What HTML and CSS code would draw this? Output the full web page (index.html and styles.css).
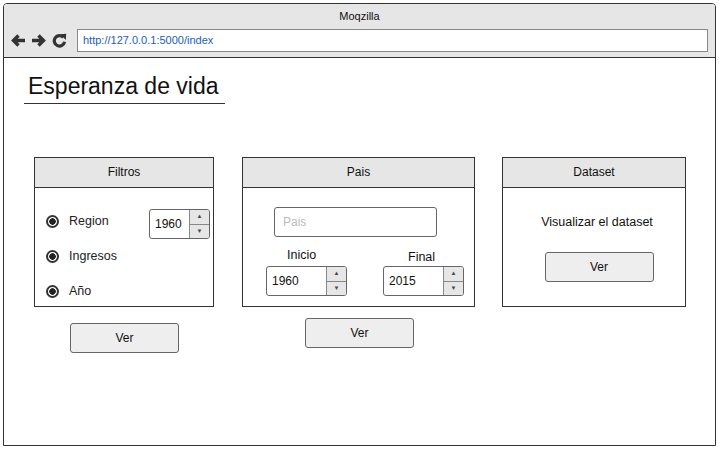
FILE: index.html
```html
<!DOCTYPE html>
<html lang="es">
<head>
<meta charset="utf-8">
<title>Moqzilla</title>
<link rel="stylesheet" href="styles.css">
</head>
<body>
<div class="window">
  <div class="chrome">
    <div class="title">Moqzilla</div>
    <div class="navrow">
      <div class="navicons">
        <svg width="16" height="15" viewBox="0 0 16 15"><path d="M15 7.5H4M8.5 2.5L3.5 7.5l5 5" fill="none" stroke="#333" stroke-width="3.4"/></svg>
        <svg width="16" height="15" viewBox="0 0 16 15"><path d="M1 7.5H12M7.5 2.5l5 5-5 5" fill="none" stroke="#333" stroke-width="3.4"/></svg>
        <svg width="15" height="15" viewBox="0 0 15 15"><path d="M11.3 4.3A5.2 5.2 0 1 0 12.6 8.8" fill="none" stroke="#333" stroke-width="3.2"/><path d="M8.2 1.2L14.2 0.8 13.8 7z" fill="#333"/></svg>
      </div>
      <div class="url">http://127.0.0.1:5000/index</div>
    </div>
  </div>
  <div class="page">
    <h1 class="heading">Esperanza de vida</h1>
    <div class="columns">
      <div class="col col-filtros">
        <div class="panel panel-filtros">
          <div class="panel-head">Filtros</div>
          <div class="panel-body filtros-body">
            <div class="radios">
              <div class="radio"><span class="dot"></span>Region</div>
              <div class="radio"><span class="dot"></span>Ingresos</div>
              <div class="radio"><span class="dot"></span>Año</div>
            </div>
            <div class="spin spin-small">
              <span class="spin-val">1960</span>
              <span class="spin-btns"><span class="up">▲</span><span class="down">▼</span></span>
            </div>
          </div>
        </div>
        <div class="btn btn-filtros">Ver</div>
      </div>
      <div class="col col-pais">
        <div class="panel panel-pais">
          <div class="panel-head">Pais</div>
          <div class="panel-body pais-body">
            <div class="textinput">Pais</div>
            <div class="ranges">
              <div class="range range-inicio">
                <div class="range-label">Inicio</div>
                <div class="spin spin-wide">
                  <span class="spin-val">1960</span>
                  <span class="spin-btns"><span class="up">▲</span><span class="down">▼</span></span>
                </div>
              </div>
              <div class="range range-final">
                <div class="range-label label-final">Final</div>
                <div class="spin spin-wide">
                  <span class="spin-val">2015</span>
                  <span class="spin-btns"><span class="up">▲</span><span class="down">▼</span></span>
                </div>
              </div>
            </div>
          </div>
        </div>
        <div class="btn btn-pais">Ver</div>
      </div>
      <div class="col col-dataset">
        <div class="panel panel-dataset">
          <div class="panel-head">Dataset</div>
          <div class="panel-body dataset-body">
            <div class="dataset-text">Visualizar el dataset</div>
            <div class="btn btn-dataset">Ver</div>
          </div>
        </div>
      </div>
    </div>
  </div>
</div>
</body>
</html>
```
FILE: styles.css
```css
* { box-sizing: border-box; }
html, body { margin: 0; padding: 0; background: #fff; }
body {
  font-family: "Liberation Sans", Arial, sans-serif;
  color: #222;
  width: 719px;
  height: 449px;
  overflow: hidden;
}
.window {
  margin: 3px 0 0 3px;
  width: 713px;
  height: 443px;
  border: 1px solid #333;
  border-radius: 4px 4px 0 0;
  display: flex;
  flex-direction: column;
}
.chrome {
  height: 54px;
  background: #e6e6e6;
  border-bottom: 1px solid #333;
  border-radius: 3px 3px 0 0;
  display: flex;
  flex-direction: column;
}
.title {
  text-align: center;
  font-size: 11px;
  line-height: 12px;
  margin-top: 6px;
  color: #111;
}
.navrow {
  display: flex;
  align-items: center;
  margin-top: 7px;
}
.navicons {
  display: flex;
  align-items: center;
  gap: 5px;
  padding-left: 6px;
  width: 73px;
}
.url {
  width: 631px;
  height: 23px;
  background: #fff;
  border: 1px solid #888;
  font-size: 11px;
  line-height: 21px;
  color: #1a5dbb;
  padding-left: 5px;
}
.page {
  flex: 1;
  padding: 15px 0 0 20px;
}
.heading {
  margin: 0;
  display: inline-block;
  font-weight: normal;
  font-size: 23px;
  line-height: 27px;
  padding: 0 6px 3px 4px;
  border-bottom: 1px solid #333;
  color: #111;
}
.columns {
  display: flex;
  align-items: flex-start;
  margin-top: 53px;
  margin-left: 10px;
}
.col { display: flex; flex-direction: column; }
.col-pais { margin-left: 28px; }
.col-dataset { margin-left: 27px; }
.panel {
  border: 1px solid #333;
  height: 150px;
  display: flex;
  flex-direction: column;
}
.panel-filtros { width: 180px; }
.panel-pais { width: 233px; }
.panel-dataset { width: 184px; }
.panel-head {
  height: 30px;
  background: #e6e6e6;
  border-bottom: 1px solid #333;
  text-align: center;
  font-size: 12px;
  line-height: 29px;
  color: #111;
}
.panel-body { flex: 1; }
.filtros-body {
  display: flex;
  justify-content: space-between;
  padding: 21px 3px 0 11px;
}
.radios { display: flex; flex-direction: column; gap: 20px; padding-top: 5px; }
.radio {
  display: flex;
  align-items: center;
  font-size: 12.5px;
  line-height: 15px;
  height: 15px;
  color: #222;
}
.dot {
  width: 13px;
  height: 13px;
  border: 2px solid #333;
  border-radius: 50%;
  margin-right: 10px;
  background: radial-gradient(circle, #222 0 3px, transparent 3.5px);
}
.spin {
  display: flex;
  border: 1px solid #666;
  border-radius: 3px;
  height: 30px;
  background: #fff;
  overflow: hidden;
}
.spin-small { width: 61px; }
.spin-wide { width: 81px; }
.spin-val {
  flex: 1;
  font-size: 12px;
  line-height: 28px;
  padding-left: 5px;
  color: #111;
}
.spin-btns {
  width: 20px;
  display: flex;
  flex-direction: column;
  border-left: 1px solid #888;
  background: #e6e6e6;
}
.spin-btns span {
  flex: 1;
  font-size: 6px;
  line-height: 13px;
  text-align: center;
  color: #444;
}
.spin-btns .up { border-bottom: 1px solid #888; }
.pais-body { padding: 19px 0 0 23px; }
.textinput {
  width: 163px;
  height: 30px;
  border: 1px solid #666;
  border-radius: 3px;
  font-size: 12px;
  line-height: 28px;
  padding-left: 8px;
  color: #bbb;
  margin-left: 8px;
}
.ranges {
  display: flex;
  margin-top: 11px;
}
.range { display: flex; flex-direction: column; }
.range-final { margin-left: 36px; }
.range-label {
  font-size: 12.5px;
  line-height: 15px;
  height: 18px;
  padding-left: 21px;
  color: #111;
}
.label-final { padding-left: 25px; padding-top: 2px; }
.btn {
  width: 109px;
  height: 30px;
  border: 1px solid #666;
  border-radius: 3px;
  background: #eeeeee;
  text-align: center;
  font-size: 12px;
  line-height: 28px;
  color: #111;
}
.btn-filtros { margin: 16px 0 0 36px; }
.btn-pais { margin: 11px 0 0 63px; }
.dataset-body {
  display: flex;
  flex-direction: column;
  align-items: center;
  padding: 27px 0 0 6px;
}
.dataset-text { font-size: 12.5px; line-height: 15px; color: #111; }
.btn-dataset { margin: 22px 0 0 4px; }
```
